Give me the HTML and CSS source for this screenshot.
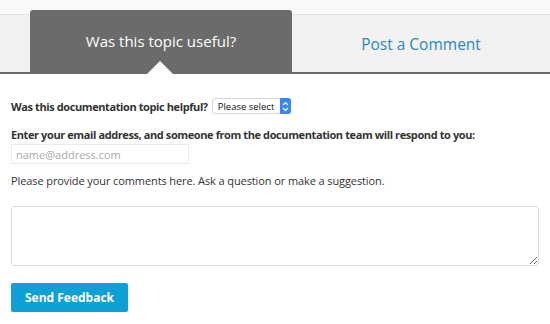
FILE: index.html
```html
<!DOCTYPE html>
<html lang="en">
<head>
    <meta charset="UTF-8">
    <title>Feedback</title>
    <link rel="stylesheet" href="styles.css">
</head>
<body>
    <div class="tabs">
        <div class="tab active">Was this topic useful?</div>
        <div class="tab">Post a Comment</div>
    </div>

    <form class="feedback">
        <div class="row">
            <label class="strong" for="helpful">Was this documentation topic helpful?</label>
            <div class="select">
                <span>Please select</span>
                <span class="stepper">
                    <svg width="7" height="11" viewBox="0 0 7 11"><path d="M1 4 L3.5 1.5 L6 4 M1 7 L3.5 9.5 L6 7" fill="none" stroke="#fff" stroke-width="1.2"/></svg>
                </span>
            </div>
        </div>
        <p class="strong">Enter your email address, and someone from the documentation team will respond to you:</p>
        <input type="text" class="email" placeholder="name@address.com">
        <p class="hint">Please provide your comments here. Ask a question or make a suggestion.</p>
        <textarea class="comments"></textarea>
        <button type="button" class="send">Send Feedback</button>
    </form>
</body>
</html>
```

FILE: styles.css
```css
:root {
    --dark-tab: #6b6b6b;
    --strip: #f2f2f2;
    --text: #333333;
    --link: #2b86c2;
    --button: #0ea1d8;
}

* {
    margin: 0;
    padding: 0;
    box-sizing: border-box;
    font-family: 'Open Sans', sans-serif;
}

body {
    background: #ffffff;
    color: var(--text);
    width: 550px;
    overflow: hidden;
}

.tabs {
    display: flex;
    margin-top: 14px;
    padding-left: 30px;
    height: 60px;
    background: var(--strip);
    border-top: 1px solid #e3e3e3;
    border-bottom: 2px solid var(--dark-tab);
    box-shadow: 0 -14px 0 #f9f9f9;
}

.tab {
    flex: 1;
    display: flex;
    align-items: center;
    justify-content: center;
    font-size: 15.5px;
    color: var(--link);
}

.tab.active {
    flex: 0 0 262px;
    margin-top: -5px;
    background: var(--dark-tab);
    color: #ffffff;
    font-size: 15px;
    border-radius: 3px 3px 0 0;
    position: relative;
}

.tab.active::after {
    content: '';
    position: absolute;
    left: 117px;
    bottom: -2px;
    border-left: 13px solid transparent;
    border-right: 13px solid transparent;
    border-bottom: 13px solid #ffffff;
}

.feedback {
    padding: 24px 11px 0;
    font-size: 11px;
}

.row {
    display: flex;
    align-items: center;
    gap: 4px;
}

.strong {
    font-weight: 700;
    letter-spacing: -0.4px;
}

.select {
    display: flex;
    align-items: center;
    width: 79px;
    height: 16px;
    border: 1px solid #d6d6d6;
    border-radius: 3px;
    background: #ffffff;
    font-family: 'Liberation Sans', sans-serif;
    font-size: 9.5px;
    letter-spacing: 0;
    color: #111;
}

.select span:first-child {
    flex: 1;
    padding-left: 5px;
}

.stepper {
    display: flex;
    align-items: center;
    justify-content: center;
    width: 11px;
    height: 16px;
    margin: -1px -1px -1px 0;
    background: #3a86f0;
    border-radius: 0 3px 3px 0;
}

p.strong {
    margin-top: 13px;
}

.email {
    display: block;
    margin-top: 2px;
    width: 178px;
    height: 20px;
    border: 1px solid #ececec;
    padding: 0 4px;
    font-size: 11px;
    color: var(--text);
}

.email::placeholder {
    color: #a9a9a9;
}

.hint {
    margin-top: 9px;
    letter-spacing: -0.1px;
}

.comments {
    display: block;
    margin-top: 18px;
    width: 528px;
    height: 60px;
    border: 1px solid #dcdcdc;
    border-radius: 3px;
    resize: vertical;
}

.send {
    margin-top: 17px;
    width: 117px;
    height: 29px;
    border: none;
    border-radius: 2px;
    background: var(--button);
    color: #ffffff;
    font-size: 12px;
    font-weight: 700;
}
```
